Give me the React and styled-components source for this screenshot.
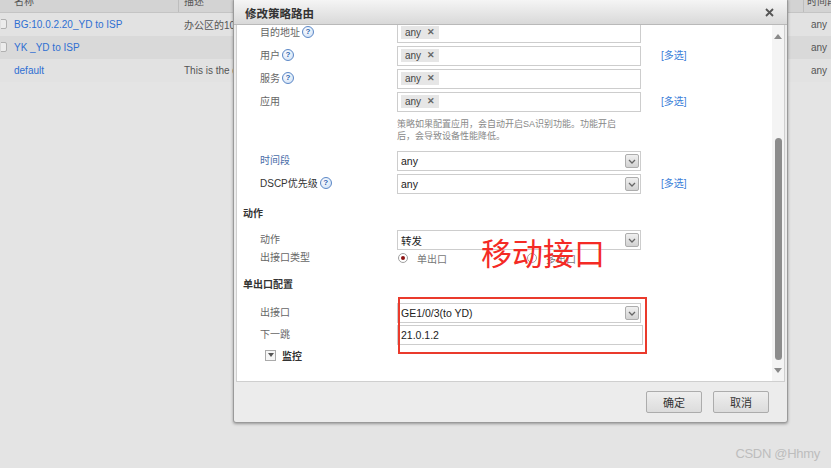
import React from "react"
import styled, { createGlobalStyle } from "styled-components"

const GlobalStyle = createGlobalStyle`
  html, body {
    margin: 0;
    padding: 0;
    background: #e4e4e4;
    overflow: hidden;
  }
  body {
    font-family: "Liberation Sans", "Noto Sans CJK SC", sans-serif;
  }
`

const Page = styled.div`
  position: relative;
  width: 831px;
  height: 468px;
  overflow: hidden;
  background: #e4e4e4;
`

/* background list (dimmed by the dialog mask) */
const Table = styled.div`
  margin-top: -11px;
`

const TableRow = styled.div`
  display: grid;
  grid-template-columns: 178px 1fr 28px;
  height: ${p => (p.$head ? 24 : 23)}px;
  background: ${p => p.$bg};
  border-bottom: 1px solid ${p => (p.$head ? "#c4c4c4" : "transparent")};
  box-sizing: border-box;
  font-size: 10px;
  color: #555;
`

const Cell = styled.div`
  display: flex;
  align-items: center;
  white-space: nowrap;
  overflow: hidden;
  padding-left: ${p => p.$pl || 0}px;
  border-left: 1px solid ${p => (p.$divider ? "#bdbdbd" : "transparent")};
`

const Check = styled.span`
  width: 10px;
  height: 10px;
  box-sizing: border-box;
  margin-left: -4px;
  margin-right: 7px;
  border: 1px solid #b0b0b0;
  background: #ececec;
  border-radius: 2px;
  visibility: ${p => (p.$off ? "hidden" : "visible")};
  flex-shrink: 0;
`

const NameLink = styled.span`
  color: #2f6fd2;
`

/* dialog */
const Modal = styled.div`
  position: absolute;
  left: 233px;
  top: -2px;
  width: 555px;
  height: 425px;
  box-sizing: border-box;
  border: 1px solid #9a9a9a;
  border-radius: 3px;
  background: #ececec;
  box-shadow: 0 1px 3px rgba(0, 0, 0, 0.35);
  display: flex;
  flex-direction: column;
`

const TitleBar = styled.div`
  height: 26px;
  flex-shrink: 0;
  display: flex;
  align-items: center;
  justify-content: space-between;
  padding: 2px 13px 0 11px;
  box-sizing: border-box;
  background: linear-gradient(#f6f6f6, #d9d9d9);
  border-bottom: 1px solid #b9b9b9;
`

const Title = styled.span`
  font-family: "Noto Sans CJK SC", sans-serif;
  font-size: 11.5px;
  font-weight: bold;
  color: #333;
`

const Body = styled.div`
  flex: 1;
  margin: 0 2px;
  background: #fff;
  border: 1px solid #cfcfcf;
  border-top: none;
  display: flex;
  overflow: hidden;
`

const Form = styled.div`
  flex: 1;
  overflow: hidden;
`

const FormInner = styled.div`
  margin-top: -2px;
`

const Row = styled.div`
  display: grid;
  grid-template-columns: 137px 244px auto;
  align-items: center;
  height: ${p => p.$h || 20}px;
  margin-bottom: ${p => (p.$mb === undefined ? 3 : p.$mb)}px;
  padding-left: 23px;
`

const Label = styled.span`
  display: flex;
  align-items: center;
  font-size: 10px;
  color: ${p => p.$color || "#666"};
  margin-top: -3px;
`

const Help = styled.span`
  width: 10px;
  height: 10px;
  margin-left: 2px;
  border-radius: 50%;
  border: 1px solid #5b87c6;
  background: radial-gradient(circle at 40% 35%, #ffffff, #c9dcf4);
  color: #2b5fae;
  font-size: 8px;
  font-weight: bold;
  line-height: 10px;
  text-align: center;
  font-family: "Liberation Sans", sans-serif;
`

const Box = styled.div`
  height: 20px;
  width: ${p => p.$w || 244}px;
  box-sizing: border-box;
  border: 1px solid #cdcdcd;
  display: flex;
  align-items: center;
  justify-content: space-between;
  padding: 0 1px 0 3px;
  font-size: 10.5px;
  color: #222;
`

const Tag = styled.span`
  display: inline-flex;
  align-items: center;
  height: 13px;
  padding: 0 4px;
  margin-top: -2px;
  background: #e6e6e6;
  font-size: 10px;
  color: #444;
`

const TagX = styled.span`
  margin-left: 6px;
  font-size: 9px;
  font-weight: bold;
  color: #666;
`

const ArrowBtn = styled.span`
  width: 14px;
  height: 14px;
  box-sizing: border-box;
  border: 1px solid #adadad;
  border-radius: 2px;
  background: linear-gradient(#f0f0f0, #d2d2d2);
  display: flex;
  align-items: center;
  justify-content: center;
`

const Multi = styled.span`
  margin-left: 20px;
  font-size: 10px;
  color: #3a7dd8;
  margin-top: -4px;
`

const Hint = styled.div`
  grid-column: 2 / 4;
  font-size: 9px;
  line-height: 12px;
  color: #888;
  white-space: nowrap;
`

const Section = styled.div`
  height: ${p => p.$h}px;
  margin-top: -3px;
  padding-left: 6px;
  display: flex;
  align-items: center;
  font-size: 10px;
  font-weight: bold;
  color: #333;
`

const Radios = styled.div`
  display: flex;
  align-items: center;
  padding-left: 1px;
`

const Radio = styled.span`
  width: 10px;
  height: 10px;
  box-sizing: border-box;
  border-radius: 50%;
  border: 1px solid #a0a0a0;
  background: #fff;
  display: flex;
  align-items: center;
  justify-content: center;
  &::after {
    content: "";
    width: 4px;
    height: 4px;
    border-radius: 50%;
    background: ${p => (p.$on ? "#8d1313" : "transparent")};
  }
`

const RadioText = styled.span`
  margin-left: 9px;
  margin-right: ${p => p.$mr || 0}px;
  font-size: 10px;
  color: #777;
`

const Toggle = styled.div`
  display: flex;
  align-items: center;
  gap: 6px;
  height: 18px;
  padding-left: 28px;
  margin-top: -2px;
  font-size: 10px;
  font-weight: bold;
  color: #333;
`

const ToggleBox = styled.span`
  width: 11px;
  height: 11px;
  box-sizing: border-box;
  border: 1px solid #aaa;
  background: #f6f6f6;
  display: flex;
  align-items: center;
  justify-content: center;
  &::after {
    content: "";
    border-left: 3px solid transparent;
    border-right: 3px solid transparent;
    border-top: 4px solid #555;
  }
`

const ScrollTrack = styled.div`
  width: 12px;
  flex-shrink: 0;
  background: #f4f4f4;
  display: flex;
  flex-direction: column;
  align-items: center;
  padding-top: 9px;
`

const ScrollArrow = styled.span`
  width: 0;
  height: 0;
  border-left: 4px solid transparent;
  border-right: 4px solid transparent;
  ${p => (p.$down ? "border-top: 5px solid #8a8a8a;" : "border-bottom: 5px solid #8a8a8a;")}
  margin-top: ${p => p.$mt || 0}px;
`

const ScrollThumb = styled.span`
  width: 7px;
  height: 222px;
  margin-top: 99px;
  border-radius: 4px;
  background: #8c8c8c;
`

const Footer = styled.div`
  height: 40px;
  flex-shrink: 0;
  display: flex;
  justify-content: flex-end;
  align-items: flex-start;
  gap: 11px;
  padding: 9px 18px 0 0;
  box-sizing: border-box;
`

const Button = styled.button`
  width: 56px;
  height: 22px;
  border: 1px solid #acacac;
  border-radius: 2px;
  background: linear-gradient(#eeeeee, #dcdcdc);
  font-family: "Noto Sans CJK SC", sans-serif;
  font-size: 11px;
  color: #333;
  padding: 0;
`

/* annotations drawn on top of the screenshot */
const RedFrame = styled.div`
  position: absolute;
  left: 398px;
  top: 297px;
  width: 249px;
  height: 57px;
  box-sizing: border-box;
  border: 2px solid #ea3a2c;
`

const RedNote = styled.div`
  position: absolute;
  left: 481px;
  top: 236px;
  font-family: "Noto Sans CJK SC", sans-serif;
  font-size: 31px;
  line-height: 1;
  color: #f42a25;
`

const Watermark = styled.div`
  position: absolute;
  right: 11px;
  bottom: 7px;
  font-size: 13px;
  color: #bdbdbd;
  letter-spacing: -0.3px;
`

const Chevron = () => (
  <svg width="8" height="5" viewBox="0 0 8 5">
    <path d="M1 1 L4 4 L7 1" fill="none" stroke="#666" strokeWidth="1.3" />
  </svg>
)

const CloseIcon = () => (
  <svg width="9" height="9" viewBox="0 0 9 9">
    <path d="M1 1 L8 8 M8 1 L1 8" stroke="#555" strokeWidth="1.8" />
  </svg>
)

const TagInput = () => (
  <Box>
    <Tag>
      any<TagX>✕</TagX>
    </Tag>
  </Box>
)

const Select = ({ value }) => (
  <Box>
    <span>{value}</span>
    <ArrowBtn>
      <Chevron />
    </ArrowBtn>
  </Box>
)

const rows = [
  { name: "BG:10.0.2.20_YD to ISP", desc: "办公区的10.0.2.20走移动线路", check: true, bg: "#e2e2e2" },
  { name: "YK _YD to ISP", desc: "", check: true, bg: "#d9d9d9" },
  { name: "default", desc: "This is the default policy route", check: false, bg: "#e2e2e2" },
]

const App = () => (
  <Page>
    <GlobalStyle />
    <Table>
      <TableRow $head $bg="#d3d3d3">
        <Cell $pl={13}>名称</Cell>
        <Cell $divider $pl={5}>描述</Cell>
        <Cell $divider $pl={3}>时间段</Cell>
      </TableRow>
      {rows.map(r => (
        <TableRow key={r.name} $bg={r.bg}>
          <Cell>
            <Check $off={!r.check} />
            <NameLink>{r.name}</NameLink>
          </Cell>
          <Cell $pl={5}>{r.desc}</Cell>
          <Cell $pl={7}>any</Cell>
        </TableRow>
      ))}
    </Table>

    <Modal>
      <TitleBar>
        <Title>修改策略路由</Title>
        <CloseIcon />
      </TitleBar>
      <Body>
        <Form>
          <FormInner>
            <Row>
              <Label>目的地址<Help>?</Help></Label>
              <TagInput />
            </Row>
            <Row>
              <Label>用户<Help>?</Help></Label>
              <TagInput />
              <Multi>[多选]</Multi>
            </Row>
            <Row>
              <Label>服务<Help>?</Help></Label>
              <TagInput />
            </Row>
            <Row $mb={0}>
              <Label>应用</Label>
              <TagInput />
              <Multi>[多选]</Multi>
            </Row>
            <Row $h={36} $mb={3}>
              <Hint>
                策略如果配置应用，会自动开启SA识别功能。功能开启
                <br />
                后，会导致设备性能降低。
              </Hint>
            </Row>
            <Row>
              <Label $color="#4a6ea9">时间段</Label>
              <Select value="any" />
            </Row>
            <Row>
              <Label $color="#333">DSCP优先级<Help>?</Help></Label>
              <Select value="any" />
              <Multi>[多选]</Multi>
            </Row>
            <Section $h={36}>动作</Section>
            <Row $mb={0}>
              <Label>动作</Label>
              <Select value="转发" />
            </Row>
            <Row $h={16} $mb={0}>
              <Label>出接口类型</Label>
              <Radios>
                <Radio $on />
                <RadioText $mr={80}>单出口</RadioText>
                <Radio />
                <RadioText>多出口</RadioText>
              </Radios>
            </Row>
            <Section $h={40}>单出口配置</Section>
            <Row $mb={2}>
              <Label>出接口</Label>
              <Select value="GE1/0/3(to YD)" />
            </Row>
            <Row>
              <Label>下一跳</Label>
              <Box $w={246}>21.0.1.2</Box>
            </Row>
            <Toggle>
              <ToggleBox />
              监控
            </Toggle>
          </FormInner>
        </Form>
        <ScrollTrack>
          <ScrollArrow />
          <ScrollThumb />
          <ScrollArrow $down $mt={8} />
        </ScrollTrack>
      </Body>
      <Footer>
        <Button>确定</Button>
        <Button>取消</Button>
      </Footer>
    </Modal>

    <RedNote>移动接口</RedNote>
    <RedFrame />
    <Watermark>CSDN @Hhmy</Watermark>
  </Page>
)

export default App
